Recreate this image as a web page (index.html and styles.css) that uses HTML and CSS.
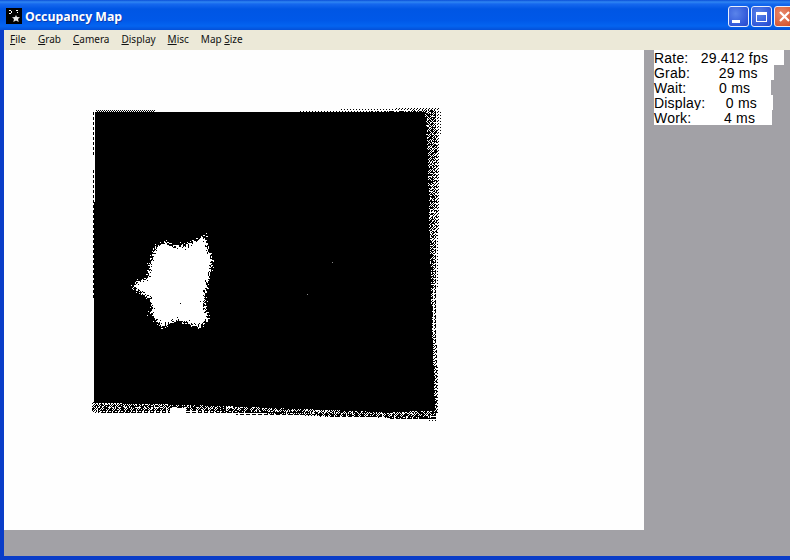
FILE: index.html
```html
<!DOCTYPE html>
<html lang="en">

<head>
    <meta charset="UTF-8">
    <title>Occupancy Map</title>
    <link rel="stylesheet" href="styles.css">
</head>

<body>
    <div class="ventana">
        <div class="titulo">
            <svg class="icono" viewBox="0 0 16 16" shape-rendering="crispEdges">
                <rect width="16" height="16" fill="#000" />
                <path d="M3 2h2v1h-2zM5 3h1v2h-1zM3 5h2v1h-2zM10 2h2v1h-2zM11 4h1v1h-1z" fill="#fff" />
                <path d="M10 7l1 2 3 .3-2 1.7.7 3-2.700-1.400-2.700 1.400.7-3-2-1.700 3-.3z" fill="#e8e8e8" shape-rendering="auto" />
            </svg>
            <span class="titulo-texto">Occupancy Map</span>
            <div class="botones">
                <div class="boton"><span class="min"></span></div>
                <div class="boton"><span class="max"></span></div>
                <div class="boton cerrar">
                    <svg viewBox="0 0 21 21" width="21" height="21">
                        <path d="M5.500 5.500l10 10M15.500 5.500l-10 10" stroke="#fff" stroke-width="2.400" />
                    </svg>
                </div>
            </div>
        </div>

        <div class="menu">
            <span><u>F</u>ile</span>
            <span><u>G</u>rab</span>
            <span><u>C</u>amera</span>
            <span><u>D</u>isplay</span>
            <span><u>M</u>isc</span>
            <span>Map <u>S</u>ize</span>
        </div>

        <div class="cliente">
            <div class="lienzo">
                <svg class="mapa" viewBox="4 50 640 480" width="640" height="480" shape-rendering="crispEdges">
                    <defs>
                        <pattern id="trama" width="2" height="2" patternUnits="userSpaceOnUse">
                            <rect width="1" height="1" fill="#000" />
                            <rect x="1" y="1" width="1" height="1" fill="#000" />
                        </pattern>
                        <pattern id="trama-suave" width="3" height="3" patternUnits="userSpaceOnUse">
                            <rect width="1" height="1" fill="#000" />
                            <rect x="2" y="1" width="1" height="1" fill="#000" />
                        </pattern>
                        <pattern id="rayas" width="6" height="2" patternUnits="userSpaceOnUse">
                            <rect width="4" height="1" fill="#000" />
                        </pattern>
                        <filter id="ruido" x="-15%" y="-15%" width="130%" height="130%">
                            <feTurbulence type="fractalNoise" baseFrequency="0.6" numOctaves="2" seed="7" />
                            <feDisplacementMap in="SourceGraphic" scale="14" xChannelSelector="R" yChannelSelector="G" />
                        </filter>
                        <filter id="ruido-fino" x="-5%" y="-5%" width="110%" height="110%">
                            <feTurbulence type="fractalNoise" baseFrequency="0.8" numOctaves="1" seed="3" />
                            <feDisplacementMap in="SourceGraphic" scale="3" xChannelSelector="R" yChannelSelector="G" />
                        </filter>
                    </defs>

                    <!-- bordes con trama -->
                    <path d="M300 110 L380 109 L439 107 L441 112 L439 200 L437 320 L438 412 L436 421 L380 417 L280 415 L185 411 L93 414 L91 405 L94 400 L300 405 L420 405 L420 115 L300 114 Z" fill="url(#trama-suave)" />
                    <path d="M340 112 L436 110 L435 200 L433 320 L436 412 L436 419 L300 415 L190 410 L92 412 L92 404 L150 404 Z" fill="url(#trama)" filter="url(#ruido-fino)" />
                    <path d="M185 408 L437 417 L437 420 L280 415 L100 413 L100 410 Z" fill="url(#rayas)" />
                    <path d="M96 110 L155 110 L155 113 L96 113 Z" fill="url(#trama)" />

                    <!-- zona ocupada -->
                    <path d="M95 112 L425 112 L428 160 L429 215 L431 280 L432 330 L434 380 L435 411 L380 412 L300 409 L220 406 L150 404 L94 403 L94 300 Z" fill="#000" />

                    <!-- lineas punteadas del borde -->
                    <path d="M437 130 L435 345 M93 112 L93 157 M93 170 L93 300 M436 345 L436 415" stroke="#000" stroke-width="1" stroke-dasharray="3 2" fill="none" />

                    <!-- zona libre en el centro -->
                    <path d="M133 287 L140 280 L148 280 L150 267 L155 248 L165 242 L173 247 L186 245 L198 240 L204 235 L208 248 L212 258 L210 275 L206 288 L204 305 L208 318 L200 327 L187 323 L177 320 L170 323 L162 327 L153 318 L150 298 L142 293 Z" fill="#fff" filter="url(#ruido)" />
                    <path d="M153 285 L153 268 L158 252 L165 248 L173 252 L186 250 L196 248 L200 254 L202 272 L198 290 L197 310 L186 316 L176 314 L164 318 L157 312 L155 296 Z" fill="#fff" />
                    <path d="M170 408 L186 408 L185 420 L170 420 Z" fill="#fff" />

                    <!-- puntos sueltos -->
                    <path d="M332 262h1v1h-1zM307 294h1v1h-1z" fill="#888" />
                    <path d="M180 303h1v1h-1z" fill="#000" />
                </svg>
            </div>
            <div class="lateral">
                <div class="stats">
                    <div class="fila">Rate:   29.412 fps    </div>
                    <div class="fila">Grab:       29 ms    </div>
                    <div class="fila">Wait:        0 ms     </div>
                    <div class="fila">Display:     0 ms    </div>
                    <div class="fila">Work:        4 ms    </div>
                </div>
            </div>
        </div>
    </div>
</body>

</html>
```

FILE: styles.css
```css
html,
body {
    margin: 0;
    padding: 0;
    overflow: hidden;
}

.ventana {
    display: flex;
    flex-direction: column;
    width: 790px;
    height: 560px;
    box-sizing: border-box;
    border-bottom: 4px solid #0a3dc8;
    background-color: #a2a1a6;
}

.titulo {
    display: flex;
    align-items: center;
    height: 30px;
    flex-shrink: 0;
    padding: 2px 0 0 6px;
    box-sizing: border-box;
    background: linear-gradient(#0a4fd8 0, #2f86f2 2px, #1668ee 4px, #0056e4 9px, #0058e8 20px, #0464f0 26px, #0450d8 30px);
}

.icono {
    width: 16px;
    height: 16px;
}

.titulo-texto {
    margin-left: 3px;
    font-family: "Open Sans", sans-serif;
    font-weight: 700;
    font-size: 12.3px;
    color: white;
    text-shadow: 1px 1px 0 #0a3cb0;
}

.botones {
    display: flex;
    gap: 2px;
    margin-left: auto;
    margin-right: -5px;
    margin-top: 1px;
}

.boton {
    display: flex;
    align-items: center;
    justify-content: center;
    width: 21px;
    height: 21px;
    box-sizing: border-box;
    border: 1px solid #e8eefc;
    border-radius: 3px;
    background: radial-gradient(circle at 35% 35%, #5a84ea, #2e55d8 75%, #2a48c0);
}

.cerrar {
    background: radial-gradient(circle at 35% 35%, #e88a6c, #d85a36 70%, #c04020);
}

.min {
    width: 8px;
    height: 3px;
    margin: 9px 6px 0 0;
    background-color: white;
}

.max {
    width: 11px;
    height: 10px;
    box-sizing: border-box;
    border: 1px solid white;
    border-top-width: 3px;
}

.menu {
    display: flex;
    align-items: center;
    gap: 12px;
    height: 20px;
    flex-shrink: 0;
    padding: 0 0 2px 6px;
    box-sizing: border-box;
    border-left: 4px solid #0a3dc8;
    background-color: #ece9d8;
    font-family: "Noto Sans", sans-serif;
    font-size: 10px;
    color: #111;
}

.cliente {
    display: flex;
    flex: 1;
    border-left: 4px solid #0a3dc8;
}

.lienzo {
    width: 640px;
    height: 480px;
    flex-shrink: 0;
    background-color: #fefefe;
}

.mapa {
    display: block;
}

.lateral {
    flex: 1;
    padding-left: 10px;
}

.stats {
    display: flex;
    flex-direction: column;
    align-items: flex-start;
}

.fila {
    height: 15px;
    padding-top: 1px;
    box-sizing: border-box;
    line-height: 15px;
    background-color: white;
    white-space: pre;
    font-family: "Liberation Sans", Arial, sans-serif;
    font-size: 14px;
    letter-spacing: 0.2px;
    color: #000;
}
```
